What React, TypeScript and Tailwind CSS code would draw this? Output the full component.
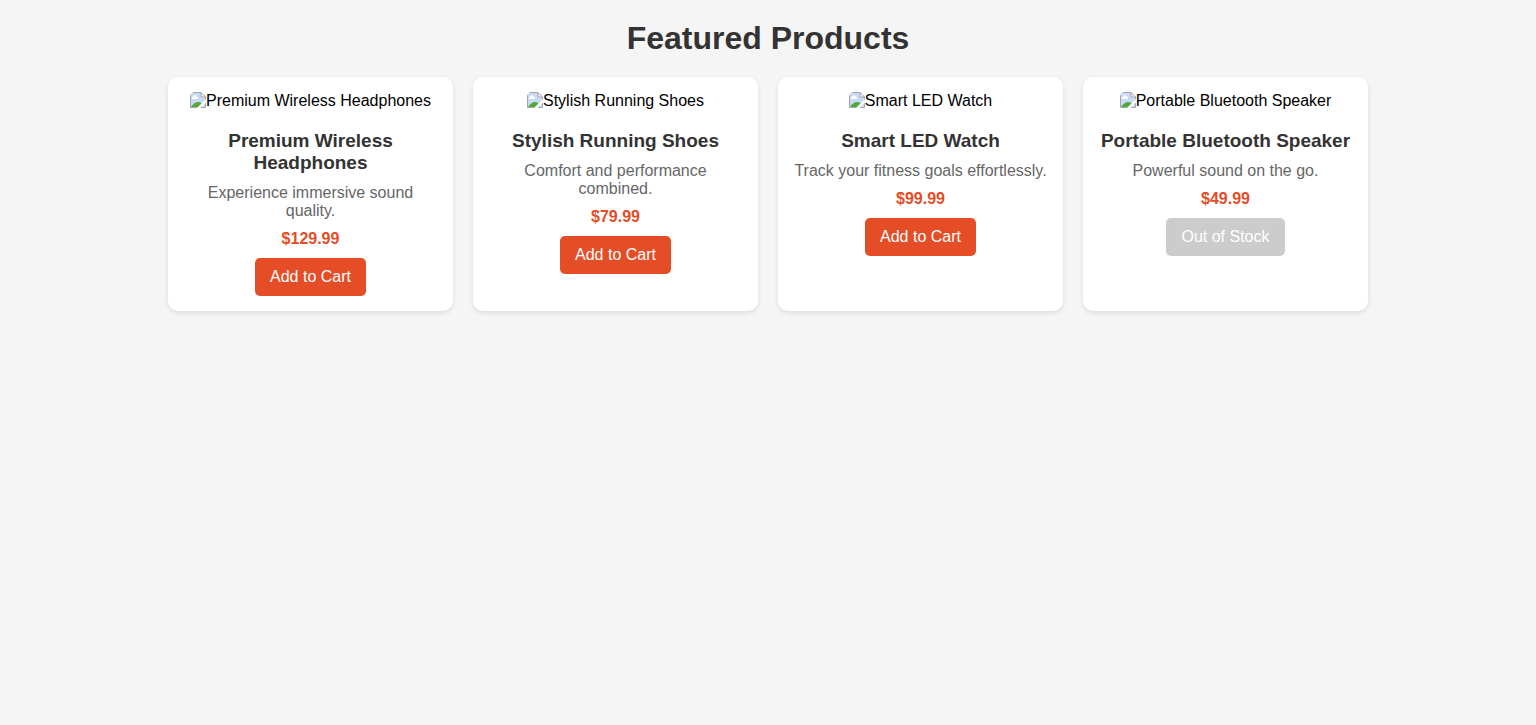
type Product = {
  name: string;
  description: string;
  price: string;
  inStock: boolean;
};

const products: Product[] = [
  { name: 'Premium Wireless Headphones', description: 'Experience immersive sound quality.', price: '$129.99', inStock: true },
  { name: 'Stylish Running Shoes', description: 'Comfort and performance combined.', price: '$79.99', inStock: true },
  { name: 'Smart LED Watch', description: 'Track your fitness goals effortlessly.', price: '$99.99', inStock: true },
  { name: 'Portable Bluetooth Speaker', description: 'Powerful sound on the go.', price: '$49.99', inStock: false },
];

function MissingImageIcon() {
  return (
    <svg className="size-4 shrink-0 rounded-tl-[5px]" viewBox="0 0 16 16" aria-hidden="true">
      <path d="M0.5 0.5H11L15.5 5V15.5H0.5Z" fill="#c8daf8" />
      <path d="M2 7V6C2 5.3 2.6 4.8 3.3 4.8C3.5 3.8 4.2 3.2 5 3.2C5.9 3.2 6.6 3.8 6.8 4.8C7.5 4.8 8 5.3 8 6V7Z" fill="#fff" />
      <path d="M1.5 15V14C3.5 11.8 5.5 10 8 10C9.3 10 10.4 10.4 11.5 11.2V15Z" fill="#4faa3a" />
      <path d="M11 1V5H15Z" fill="#fff" />
      <path d="M0.5 15.5V0.5H11L15.5 5V15.5ZM11 0.5V5H15.5" fill="none" stroke="#a3a5a8" />
      <path d="M16 7V10.5L10.5 16H7Z" fill="#fff" />
    </svg>
  );
}

function ProductCard({ product }: { product: Product }) {
  return (
    <article className="rounded-[10px] bg-white p-[15px] text-center shadow-[0_2px_5px_rgba(0,0,0,0.1)]">
      <div className="mb-5 flex items-start justify-center leading-[18px] text-black">
        <MissingImageIcon />
        <span>{product.name}</span>
      </div>
      <h2 className="mb-[10px] text-[19px] leading-[22px] font-bold text-[#333]">{product.name}</h2>
      <p className="mb-[10px] leading-[18px] text-[#666]">{product.description}</p>
      <p className="mb-[10px] leading-[18px] font-bold text-[#e44d26]">{product.price}</p>
      <button
        type="button"
        disabled={!product.inStock}
        className="mx-auto block cursor-pointer rounded-[5px] bg-[#e44d26] px-[15px] py-[10px] leading-[18px] text-white disabled:cursor-not-allowed disabled:bg-[#ccc]"
      >
        {product.inStock ? 'Add to Cart' : 'Out of Stock'}
      </button>
    </article>
  );
}

export default function App() {
  return (
    <main className="min-h-screen bg-[#f5f5f5] p-5 font-['Liberation_Sans',Arial,sans-serif] text-base">
      <h1 className="mb-5 text-center text-[32px] leading-[37px] font-bold text-[#333]">Featured Products</h1>
      <section className="mx-auto grid max-w-[1200px] grid-cols-[repeat(auto-fit,minmax(250px,1fr))] gap-5">
        {products.map((product) => (
          <ProductCard key={product.name} product={product} />
        ))}
      </section>
    </main>
  );
}
